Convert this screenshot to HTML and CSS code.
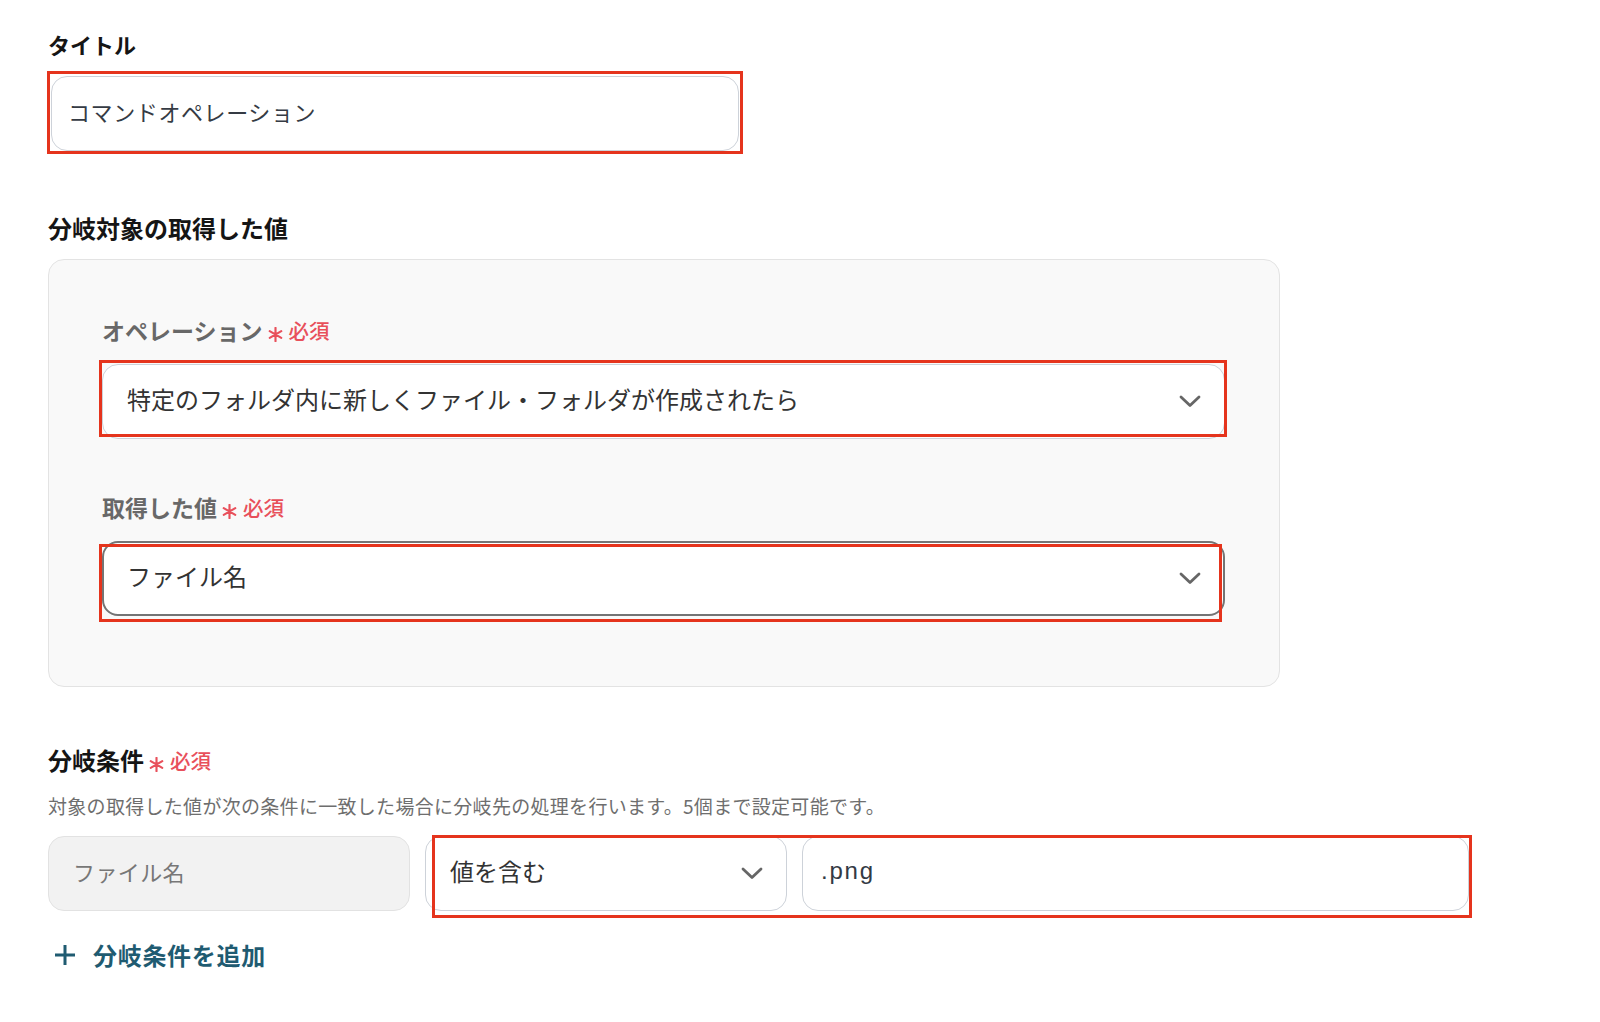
FILE: index.html
```html
<!DOCTYPE html>
<html lang="ja">
<head>
<meta charset="utf-8">
<title>分岐設定</title>
<link rel="stylesheet" href="styles.css">
</head>
<body>
<main class="form">
  <section class="group">
    <h2 class="heading heading-title">タイトル</h2>
    <div class="mark mark-title">
      <div class="input"><span class="txt">コマンドオペレーション</span></div>
    </div>
  </section>

  <section class="group group-target">
    <h2 class="heading">分岐対象の取得した値</h2>
    <div class="panel">
      <div class="sub-label">オペレーション<span class="req"><svg class="star" viewBox="0 0 14 14" width="15" height="15"><path d="M7 0.8V13.2M1.6 3.9L12.4 10.1M1.6 10.1L12.4 3.9"/></svg><span class="req-text">必須</span></span></div>
      <div class="mark mark-op">
        <div class="select">
          <span class="txt">特定のフォルダ内に新しくファイル・フォルダが作成されたら</span>
          <svg class="chev" viewBox="0 0 22 13" width="22" height="13"><path d="M2 2L11 10.5L20 2"/></svg>
        </div>
      </div>
      <div class="sub-label sub-label-2">取得した値<span class="req"><svg class="star" viewBox="0 0 14 14" width="15" height="15"><path d="M7 0.8V13.2M1.6 3.9L12.4 10.1M1.6 10.1L12.4 3.9"/></svg><span class="req-text">必須</span></span></div>
      <div class="mark mark-val">
        <div class="select select-focus">
          <span class="txt">ファイル名</span>
          <svg class="chev" viewBox="0 0 22 13" width="22" height="13"><path d="M2 2L11 10.5L20 2"/></svg>
        </div>
      </div>
    </div>
  </section>

  <section class="group group-cond">
    <h2 class="heading heading-req">分岐条件<span class="req"><svg class="star" viewBox="0 0 14 14" width="15" height="15"><path d="M7 0.8V13.2M1.6 3.9L12.4 10.1M1.6 10.1L12.4 3.9"/></svg><span class="req-text">必須</span></span></h2>
    <p class="desc">対象の取得した値が次の条件に一致した場合に分岐先の処理を行います。5個まで設定可能です。</p>
    <div class="cond-row">
      <div class="field-static"><span class="txt">ファイル名</span></div>
      <div class="mark mark-cond">
        <div class="select select-small">
          <span class="txt">値を含む</span>
          <svg class="chev" viewBox="0 0 22 13" width="22" height="13"><path d="M2 2L11 10.5L20 2"/></svg>
        </div>
        <div class="input input-value"><span class="txt">.png</span></div>
      </div>
    </div>
    <div class="add">
      <svg class="plus" viewBox="0 0 22 22" width="22" height="22"><path d="M11 1V21M1 11H21"/></svg>
      <span>分岐条件を追加</span>
    </div>
  </section>
</main>
</body>
</html>
```

FILE: styles.css
```css
* {
  box-sizing: border-box;
}

body {
  margin: 0;
  background: #ffffff;
  font-family: "Noto Sans CJK JP", "Noto Sans", sans-serif;
  color: #1a1a1a;
}

.form {
  width: 1469px;
  padding: 28px 0 40px 48px;
}

.heading {
  margin: 0;
  font-size: 24px;
  line-height: 32px;
  font-weight: 700;
  color: #151515;
}

.heading-title {
  font-size: 22px;
}

.heading-req {
  display: flex;
  align-items: center;
}

/* red annotation frames */
.mark {
  position: relative;
}

.mark::after {
  content: "";
  position: absolute;
  border: 3px solid #e5341d;
  pointer-events: none;
}

.mark-title {
  margin: 16px 0 0 3px;
  width: 688px;
}

.mark-title::after {
  inset: -5px -4px -3px -4px;
}

.mark-op::after {
  inset: -4px -2px 2px -3px;
}

.mark-val::after {
  inset: 3px 3px -6px -3px;
}

.txt {
  margin-bottom: 6px;
  white-space: nowrap;
}

.input {
  height: 75px;
  border: 1px solid #cdd2d9;
  border-radius: 16px;
  background: #ffffff;
  display: flex;
  align-items: center;
  padding: 0 16px;
  font-size: 22px;
  letter-spacing: 0.6px;
  color: #353b44;
}

.group-target {
  margin-top: 61px;
}

.panel {
  margin-top: 15px;
  width: 1232px;
  border: 1px solid #e3e3e3;
  border-radius: 16px;
  background: #f9f9f9;
  padding: 55px 54px 70px 53px;
}

.sub-label {
  display: flex;
  align-items: center;
  font-size: 23px;
  line-height: 30px;
  font-weight: 700;
  color: #686868;
  margin-bottom: 19px;
}

.sub-label-2 {
  margin-top: 53px;
  margin-bottom: 19px;
}

.req {
  display: inline-flex;
  align-items: center;
  margin-left: 5px;
  color: #e8505b;
  font-size: 20.5px;
  font-weight: 500;
  letter-spacing: 0;
}

.star {
  margin-top: 9px;
  fill: none;
  stroke: #e8505b;
  stroke-width: 2;
  stroke-linecap: round;
}

.req-text {
  margin-left: 6px;
}

.select {
  height: 75px;
  border: 1px solid #cdd2d9;
  border-radius: 16px;
  background: #ffffff;
  display: flex;
  align-items: center;
  justify-content: space-between;
  padding: 0 23px 0 24px;
  font-size: 24px;
  color: #333333;
}

.select-focus {
  border: 2px solid #747474;
  padding-left: 23px;
  padding-right: 22px;
}

.chev {
  flex: none;
  fill: none;
  stroke: #666666;
  stroke-width: 2.8;
  stroke-linecap: round;
  stroke-linejoin: round;
}

.group-cond {
  margin-top: 57px;
}

.desc {
  margin: 17px 0 0;
  font-size: 19px;
  line-height: 26px;
  letter-spacing: 0.3px;
  color: #6e6e6e;
}

.cond-row {
  margin-top: 17px;
  display: flex;
  gap: 15px;
}

.field-static {
  width: 362px;
  height: 75px;
  flex: none;
  border: 1px solid #e2e2e2;
  border-radius: 16px;
  background: #f2f2f2;
  display: flex;
  align-items: center;
  padding: 0 24px;
  font-size: 22px;
  letter-spacing: 0.4px;
  color: #777777;
}

.mark-cond {
  flex: 1;
  display: flex;
  gap: 15px;
}

.mark-cond::after {
  inset: -1px -3px -7px 7px;
}

.select-small {
  width: 362px;
  flex: none;
}

.input-value {
  flex: 1;
  padding-left: 18px;
  font-family: "Liberation Sans", "Noto Sans CJK JP", sans-serif;
  font-size: 24px;
  letter-spacing: 1.8px;
  color: #333a44;
}

.add {
  margin-top: 29px;
  padding-left: 6px;
  display: flex;
  align-items: center;
  gap: 17px;
  font-size: 24px;
  line-height: 30px;
  font-weight: 700;
  letter-spacing: 0.7px;
  color: #1f5b71;
}

.plus {
  fill: none;
  stroke: #1f5b71;
  stroke-width: 3;
}
```
